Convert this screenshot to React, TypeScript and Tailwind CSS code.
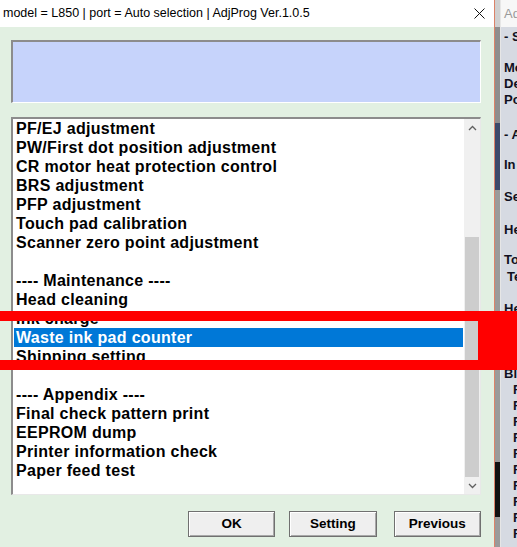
import React from "react";

const items: { label: string; selected?: boolean }[] = [
  { label: "PF/EJ adjustment" },
  { label: "PW/First dot position adjustment" },
  { label: "CR motor heat protection control" },
  { label: "BRS adjustment" },
  { label: "PFP adjustment" },
  { label: "Touch pad calibration" },
  { label: "Scanner zero point adjustment" },
  { label: "" },
  { label: "---- Maintenance ----" },
  { label: "Head cleaning" },
  { label: "Ink charge" },
  { label: "Waste ink pad counter", selected: true },
  { label: "Shipping setting" },
  { label: "" },
  { label: "---- Appendix ----" },
  { label: "Final check pattern print" },
  { label: "EEPROM dump" },
  { label: "Printer information check" },
  { label: "Paper feed test" },
];

// right-hand window, mostly cut off by the screen edge
const sideLines: { text: string; cls: string }[] = [
  { text: "- S", cls: "mt-[2px]" },
  { text: "Mo", cls: "mt-[15px]" },
  { text: "De", cls: "" },
  { text: "Po", cls: "" },
  { text: "- A", cls: "mt-[19px]" },
  { text: "In", cls: "mt-[14px]" },
  { text: "Se", cls: "mt-[16px]" },
  { text: "He", cls: "mt-[17px]" },
  { text: "To", cls: "mt-[14px]" },
  { text: "Te", cls: "mt-[1px] pl-[3px]" },
  { text: "He", cls: "mt-[16px]" },
  { text: "Bl", cls: "mt-[49px]" },
  { text: "F", cls: "pl-[9px]" },
  { text: "F", cls: "pl-[9px]" },
  { text: "F", cls: "pl-[9px]" },
  { text: "F", cls: "pl-[9px]" },
  { text: "F", cls: "pl-[9px]" },
  { text: "F", cls: "pl-[9px]" },
  { text: "F", cls: "pl-[9px]" },
  { text: "F", cls: "pl-[9px]" },
  { text: "F", cls: "pl-[9px]" },
  { text: "F", cls: "pl-[9px]" },
];

const Chevron = ({ up }: { up?: boolean }) => (
  <svg width="9" height="6" viewBox="0 0 9 6" className="block">
    <path
      d={up ? "M1 5 L4.5 1.5 L8 5" : "M1 1 L4.5 4.5 L8 1"}
      fill="none"
      stroke="#606060"
      strokeWidth="1.3"
    />
  </svg>
);

const Btn = ({ label, cls }: { label: string; cls?: string }) => (
  <button
    className={
      "h-[26px] w-[88px] border border-[#707070] bg-[#efefef] text-[13.5px] font-bold text-black shadow-[inset_1px_1px_0_#ffffff,inset_-1px_-1px_0_#a8a8a8] " +
      (cls || "")
    }
  >
    {label}
  </button>
);

export default function App() {
  return (
    <div
      className="relative flex h-[547px] w-[517px] overflow-hidden"
      style={{ fontFamily: "'Liberation Sans', Arial, sans-serif" }}
    >
      {/* main dialog */}
      <div className="flex w-[495px] shrink-0 flex-col border-r border-[#dc8268]">
        <div className="flex h-[27px] items-center justify-between bg-white pl-[3px] pr-[9px]">
          <span className="text-[12.5px] text-black">
            model = L850 | port = Auto selection | AdjProg Ver.1.0.5
          </span>
          <svg width="11" height="11" viewBox="0 0 11 11">
            <path d="M0.5 0.5 L10.5 10.5 M10.5 0.5 L0.5 10.5" stroke="#111" strokeWidth="1" />
          </svg>
        </div>

        <div className="flex flex-1 flex-col bg-[#e2f0e2] pl-[11px] pr-[13px] pt-[13px]">
          <div className="h-[63px] border-l-2 border-t-2 border-b border-r border-l-[#8c8c8c] border-t-[#8c8c8c] border-b-white border-r-white bg-[#c6d3fb]" />

          <div className="mt-[14px] flex h-[378px] border-l-2 border-t-2 border-b border-r border-l-[#8c8c8c] border-t-[#8c8c8c] border-b-[#e8e8e8] border-r-[#e8e8e8] bg-white">
            <div className="flex-1">
              {items.map((it, i) => (
                <div
                  key={i}
                  className={
                    "mx-[1px] h-[19px] whitespace-nowrap px-[2px] text-[16px] font-bold leading-[19px] tracking-[0.3px] " +
                    (it.selected ? "bg-[#0078d7] text-white" : "text-black")
                  }
                >
                  {it.label}
                </div>
              ))}
            </div>
            <div className="flex w-[16px] flex-col bg-[#f0f0f0]">
              <div className="flex h-[17px] items-center justify-center">
                <Chevron up />
              </div>
              <div className="flex flex-1 flex-col">
                <div className="mx-[1px] mt-[101px] h-[240px] bg-[#cdcdcd]" />
              </div>
              <div className="flex h-[17px] items-center justify-center">
                <Chevron />
              </div>
            </div>
          </div>

          <div className="mt-[16px] flex">
            <Btn label="OK" cls="ml-[177px]" />
            <Btn label="Setting" cls="ml-[14px]" />
            <Btn label="Previous" cls="ml-[17px]" />
          </div>
        </div>
      </div>

      {/* desktop gap between windows */}
      <div className="flex w-[5px] shrink-0 flex-col">
        <div className="h-[27px] bg-[#d0d0d0]" />
        <div className="h-[96px] bg-[#8e8e8e]" />
        <div className="h-[67px] bg-[#3b4a6a]" />
        <div className="h-[272px] bg-[#9a9a9a]" />
        <div className="h-[55px] bg-[#111111]" />
        <div className="flex-1 bg-[#9a9a9a]" />
      </div>

      {/* second window, cut off */}
      <div className="flex min-w-0 flex-1 flex-col border-l border-[#e6e6e6]">
        <div className="flex h-[27px] items-center whitespace-nowrap bg-[#f7f7f7] pl-[3px] text-[13px] text-[#9a9a9a]">
          Ad
        </div>
        <div className="flex-1 overflow-hidden bg-[#d6dae2] pl-[3px]">
          {sideLines.map((l, i) => (
            <div
              key={i}
              className={"h-[16px] whitespace-pre text-[13px] font-bold leading-[16px] text-[#101020] " + l.cls}
            >
              {l.text}
            </div>
          ))}
        </div>
      </div>

      {/* red annotation frame */}
      <div className="absolute left-0 top-[311px] h-[10px] w-[517px] bg-[#ff0000]" />
      <div className="absolute left-0 top-[360px] h-[10px] w-[517px] bg-[#ff0000]" />
      <div className="absolute left-[478px] top-[311px] h-[59px] w-[39px] bg-[#ff0000]" />
    </div>
  );
}
